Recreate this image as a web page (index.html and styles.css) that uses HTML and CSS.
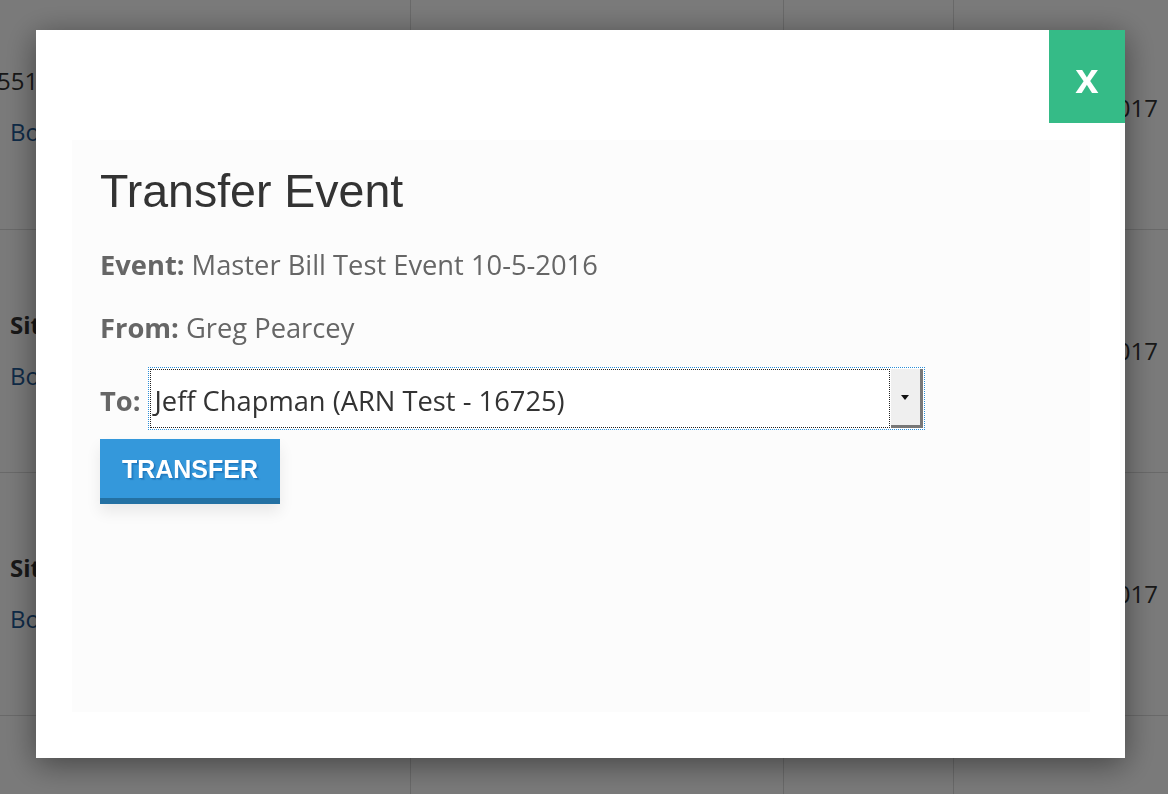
FILE: index.html
```html
<!DOCTYPE html>
<html>
<head>
<meta charset="utf-8">
<link rel="stylesheet" href="styles.css">
</head>
<body>
<div class="page">
  <table class="grid">
    <tr>
      <td class="c1"><div class="l1 shift">551-555-1234</div><div class="l2"><a>Book Now</a></div></td>
      <td class="c2"></td>
      <td class="c3"></td>
      <td class="c4">10/05/2017</td>
    </tr>
    <tr>
      <td class="c1"><div class="l1"><b>Site Visit</b></div><div class="l2"><a>Book Now</a></div></td>
      <td class="c2"></td>
      <td class="c3"></td>
      <td class="c4">10/05/2017</td>
    </tr>
    <tr>
      <td class="c1"><div class="l1"><b>Site Visit</b></div><div class="l2"><a>Book Now</a></div></td>
      <td class="c2"></td>
      <td class="c3"></td>
      <td class="c4">10/05/2017</td>
    </tr>
    <tr class="last">
      <td class="c1"></td>
      <td class="c2"></td>
      <td class="c3"></td>
      <td class="c4"></td>
    </tr>
  </table>
</div>
<div class="overlay"></div>
<div class="modal">
  <div class="close">x</div>
  <div class="panel">
    <h1 class="title">Transfer Event</h1>
    <p class="info"><b>Event:</b> Master Bill Test Event 10-5-2016</p>
    <p class="info"><b>From:</b> Greg Pearcey</p>
    <div class="to-row">
      <span class="to-label">To:</span>
      <div class="select">
        <div class="select-value">Jeff Chapman (ARN Test - 16725)</div>
        <div class="select-btn"><span class="tri"></span></div>
      </div>
    </div>
    <button class="btn">TRANSFER</button>
  </div>
</div>
</body>
</html>
```
FILE: styles.css
```css
html, body {
  margin: 0;
  padding: 0;
  background: #fff;
  overflow: hidden;
  width: 1168px;
  height: 794px;
}
body {
  font-family: "Open Sans", sans-serif;
}
.page {
  margin-top: -14px;
  height: 808px;
  overflow: hidden;
}
.grid {
  border-collapse: collapse;
  width: 1168px;
  table-layout: fixed;
  font-size: 24px;
  color: #333;
}
.grid td {
  height: 243px;
  padding: 0;
  border-bottom: 1px solid #dcdcdc;
  border-left: 1px solid #dcdcdc;
  vertical-align: middle;
  box-sizing: border-box;
  white-space: nowrap;
  overflow: hidden;
}
.grid .last td { height: 80px; }
.grid .c1 { width: 410px; border-left: none; padding-left: 10px; }
.grid .c2 { width: 373px; }
.grid .c3 { width: 170px; }
.grid .c4 { text-align: right; padding-right: 10px; }
.l1 { height: 51px; line-height: 51px; }
.l2 { height: 51px; line-height: 51px; }
.grid .l1 { margin-top: -2px; }
.shift { margin-left: -13px; }
.grid a { color: #1f5a96; }
.overlay {
  position: fixed;
  left: 0; top: 0; right: 0; bottom: 0;
  background: rgba(0, 0, 0, 0.52);
}
.modal {
  position: fixed;
  left: 36px;
  top: 30px;
  width: 1089px;
  height: 728px;
  box-sizing: border-box;
  padding: 110px 35px 46px 36px;
  background: #fff;
  box-shadow: 0 6px 30px rgba(0, 0, 0, 0.45);
  display: flex;
}
.close {
  position: absolute;
  top: 0;
  right: 0;
  width: 76px;
  height: 93px;
  background: #35bb87;
  color: #fff;
  font-family: "Liberation Sans", Arial, sans-serif;
  font-weight: bold;
  font-size: 42px;
  line-height: 89px;
  text-align: center;
  padding-top: 4px;
  box-sizing: border-box;
}
.panel {
  flex: 1;
  background: #fcfcfc;
  padding: 26px 28px;
}
.title {
  margin: 0 0 30px;
  font-family: "Liberation Sans", Arial, sans-serif;
  font-weight: normal;
  font-size: 46.5px;
  line-height: 1.1;
  color: #333;
}
.info {
  margin: 0 0 27px;
  font-size: 27.3px;
  line-height: 36px;
  color: #666;
}
.info b, .to-label { font-weight: bold; }
.to-row {
  display: flex;
  align-items: center;
  gap: 7px;
  margin-top: -6px;
}
.to-label {
  font-size: 27.3px;
  color: #666;
  padding-top: 3px;
}
.select {
  width: 777px;
  height: 63px;
  box-sizing: border-box;
  border: 1px dotted #2b8fd9;
  background: #fff;
  display: flex;
  padding: 1px;
}
.select-value {
  flex: 1;
  outline: 1px dotted #222;
  outline-offset: -1px;
  font-size: 27.3px;
  color: #333;
  line-height: 59px;
  padding-top: 2px;
  box-sizing: border-box;
  padding-left: 5px;
  margin-right: 1px;
}
.select-btn {
  width: 32px;
  background: #efefef;
  box-shadow: inset -3px -3px 0 #777;
  display: flex;
  align-items: center;
  justify-content: center;
  padding: 0 3px 3px 0;
  box-sizing: border-box;
}
.tri {
  width: 0;
  height: 0;
  border-left: 4px solid transparent;
  border-right: 4px solid transparent;
  border-top: 5px solid #111;
}
.btn {
  display: block;
  margin-top: 9px;
  width: 180px;
  height: 65px;
  border: none;
  border-bottom: 6px solid #2471a3;
  background: #3498db;
  color: #fff;
  font-family: "Liberation Sans", Arial, sans-serif;
  font-weight: bold;
  font-size: 25px;
  padding: 2px 0 0;
  text-shadow: 1px 1px 0 #1f79bf, 2px 2px 1px rgba(30, 110, 180, 0.5);
  box-shadow: 0 8px 14px rgba(0, 0, 0, 0.08);
  cursor: pointer;
}
```
